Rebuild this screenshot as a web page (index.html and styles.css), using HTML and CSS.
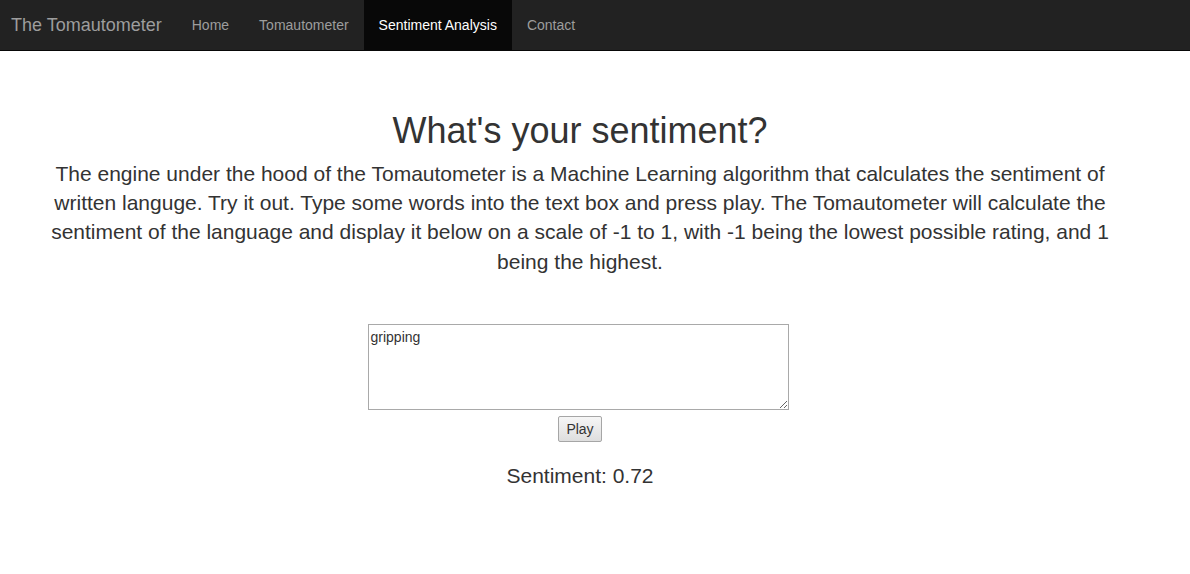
FILE: index.html
```html
<!DOCTYPE html>
<html>
<head>
<meta charset="utf-8">
<link rel="stylesheet" href="styles.css">
</head>
<body>
<nav class="navbar">
  <a class="brand" href="#">The Tomautometer</a>
  <ul class="nav">
    <li><a href="#">Home</a></li>
    <li><a href="#">Tomautometer</a></li>
    <li class="active"><a href="#">Sentiment Analysis</a></li>
    <li><a href="#">Contact</a></li>
  </ul>
</nav>
<main class="content">
  <h1 class="title">What's your sentiment?</h1>
  <p class="lead">The engine under the hood of the Tomautometer is a Machine Learning algorithm that calculates the sentiment of written languge. Try it out. Type some words into the text box and press play. The Tomautometer will calculate the sentiment of the language and display it below on a scale of -1 to 1, with -1 being the lowest possible rating, and 1 being the highest.</p>
  <form class="form">
    <textarea class="input">gripping</textarea>
    <button type="button" class="play">Play</button>
  </form>
  <p class="result">Sentiment: 0.72</p>
</main>
</body>
</html>
```
FILE: styles.css
```css
* { box-sizing: border-box; }
html, body { margin: 0; padding: 0; }
body {
  font-family: "Liberation Sans", Arial, sans-serif;
  font-size: 14px;
  line-height: 1.42857;
  color: #333;
  background: #fff;
}
.navbar {
  display: flex;
  align-items: stretch;
  height: 51px;
  background: #222;
  border-bottom: 1px solid #080808;
}
.brand {
  display: block;
  padding: 15px 15px 15px 11px;
  font-size: 18px;
  line-height: 20px;
  color: #9d9d9d;
  text-decoration: none;
}
.nav {
  display: flex;
  list-style: none;
  margin: 0;
  padding: 0;
}
.nav li a {
  display: block;
  padding: 15px 15px;
  line-height: 20px;
  font-size: 14px;
  color: #9d9d9d;
  text-decoration: none;
}
.nav li.active a {
  background: #080808;
  color: #fff;
}
.content {
  width: 1130px;
  margin-left: 15px;
  padding: 0 15px;
  text-align: center;
}
.title {
  font-size: 36px;
  font-weight: 500;
  line-height: 1.1;
  margin: 60px 0 0;
  color: #333;
}
.lead {
  font-size: 21px;
  line-height: 1.4;
  margin: 8px 0 0;
}
.form {
  margin-top: 48px;
  display: flex;
  flex-direction: column;
  align-items: center;
}
.input {
  width: 421px;
  height: 86px;
  margin-left: -4px;
  border: 1px solid #a9a9a9;
  padding: 4px 2px 2px 2px;
  font-family: "Liberation Sans", Arial, sans-serif;
  font-size: 14px;
  color: #333;
  resize: both;
}
.play {
  margin-top: 6px;
  width: 44px;
  height: 26px;
  padding: 0;
  font-family: "Liberation Sans", Arial, sans-serif;
  font-size: 14px;
  color: #333;
  background: linear-gradient(#f6f6f6, #dedede);
  border: 1px solid #a6a6a6;
  border-radius: 2px;
}
.result {
  font-size: 21px;
  line-height: 1.4;
  margin: 19px 0 0;
}
```
